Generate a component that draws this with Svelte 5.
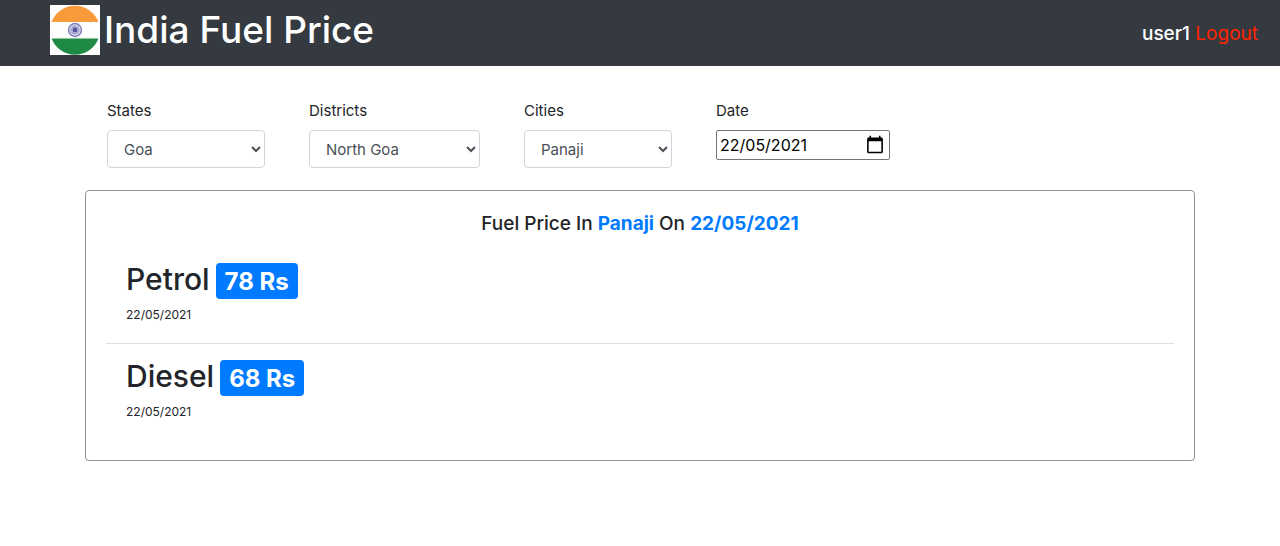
<script>
  const regions = {
    Goa: {
      'North Goa': ['Panaji', 'Mapusa'],
      'South Goa': ['Margao', 'Vasco']
    }
  };

  const fuels = [
    { name: 'Petrol', price: 78 },
    { name: 'Diesel', price: 68 }
  ];

  let region = $state('Goa');
  let district = $state('North Goa');
  let city = $state('Panaji');
  let date = $state('2021-05-22');

  let shownDate = $derived(date.split('-').reverse().join('/'));
</script>

<header>
  <a class="brand" href="#home">
    <svg class="flag" viewBox="0 0 50 50" aria-hidden="true">
      <rect width="50" height="50" fill="#fdfdfd" />
      <path d="M1.6 17A25 25 0 0 1 48.4 17Z" fill="#f89a3a" />
      <path d="M1.6 33.500A25 25 0 0 0 48.4 33.500Z" fill="#1f8a43" />
      <circle cx="25" cy="25" r="6.400" fill="#e4e4f2" stroke="#8080ba" stroke-width="1.500" />
      <circle cx="25" cy="25" r="3.600" fill="none" stroke="#9494c6" stroke-width="2.200" stroke-dasharray="0.900 0.300" />
      <circle cx="25" cy="25" r="2.400" fill="#5353a0" />
    </svg>
    <h1>India Fuel Price</h1>
  </a>
  <div class="account">
    <span class="user">user1</span>
    <a class="logout" href="#logout">Logout</a>
  </div>
</header>

<main>
  <form class="filters">
    <div class="field">
      <label for="state">States</label>
      <select id="state" class="w-state" bind:value={region}>
        {#each Object.keys(regions) as name}<option>{name}</option>{/each}
      </select>
    </div>
    <div class="field">
      <label for="district">Districts</label>
      <select id="district" class="w-district" bind:value={district}>
        {#each Object.keys(regions[region]) as name}<option>{name}</option>{/each}
      </select>
    </div>
    <div class="field">
      <label for="city">Cities</label>
      <select id="city" class="w-city" bind:value={city}>
        {#each regions[region][district] as name}<option>{name}</option>{/each}
      </select>
    </div>
    <div class="field">
      <label for="date">Date</label>
      <div class="date">
        <input id="date" type="date" bind:value={date} />
        <!-- Day-first date, whatever the browser's locale -->
        <span class="date-text" aria-hidden="true">{shownDate}</span>
      </div>
    </div>
  </form>

  <section class="card">
    <h2>Fuel Price In <b>{city}</b> On <b>{shownDate}</b></h2>
    <ul>
      {#each fuels as fuel}
        <li>
          <h3>{fuel.name} <span class="badge">{fuel.price} Rs</span></h3>
          <p>{shownDate}</p>
        </li>
      {/each}
    </ul>
  </section>
</main>

<style>
  :global(body) {
    margin: 0;
    background: #fff;
    color: #212529;
    font: 400 16px/24px Inter, 'Liberation Sans', sans-serif;
  }

  header, main, header *, main * {
    box-sizing: border-box;
  }

  h1, h2, h3, p, ul {
    margin: 0;
    padding: 0;
    font-weight: 500;
  }

  a {
    text-decoration: none;
  }

  header {
    display: flex;
    justify-content: space-between;
    align-items: center;
    height: 66px;
    padding: 0 22px 0 50px;
    background: #343a40;
    color: #fff;
  }

  .brand {
    display: flex;
    gap: 4px;
    padding-bottom: 6px;
    color: #fff;
  }

  .flag {
    width: 50px;
    height: 50px;
  }

  h1 {
    font-size: 37px;
    line-height: 50px;
  }

  .account {
    padding-top: 2px;
    font-size: 19px;
  }

  .user {
    font-weight: 500;
  }

  .logout {
    color: #f20;
  }

  main {
    max-width: 1110px;
    margin: 0 auto;
    padding: 33px 0;
  }

  .filters {
    display: flex;
    flex-wrap: wrap;
    gap: 44px;
    padding: 0 22px;
    margin-bottom: 22px;
  }

  .field {
    display: flex;
    flex-direction: column;
    gap: 7px;
  }

  label {
    font-size: 15px;
  }

  select {
    height: 38px;
    padding: 6px 12px;
    border: 1px solid #ced4da;
    border-radius: 4px;
    background: #fff;
    color: #495057;
    font: inherit;
    font-size: 15px;
  }

  .w-state {
    width: 158px;
  }

  .w-district {
    width: 171px;
  }

  .w-city {
    width: 148px;
  }

  .date {
    position: relative;
    width: 174px;
  }

  input {
    display: block;
    width: 100%;
    height: 30px;
    padding: 1px 2px;
    border: 1px solid #767676;
    border-radius: 2px;
    background: #fff;
    color: #000;
    font: inherit;
  }

  input::-webkit-datetime-edit {
    opacity: 0;
  }

  input::-webkit-calendar-picker-indicator {
    width: 20px;
    height: 20px;
  }

  .date-text {
    position: absolute;
    left: 4px;
    top: 3px;
    color: #000;
    pointer-events: none;
  }

  .card {
    padding: 20px;
    border: 1px solid #8e9093;
    border-radius: 4px;
  }

  h2 {
    padding-top: 1px;
    margin-bottom: 11px;
    font-size: 19px;
    line-height: 24px;
    text-align: center;
  }

  b {
    color: #007bff;
    font-weight: 700;
  }

  ul {
    list-style: none;
  }

  li {
    padding: 15px 20px 19px;
  }

  li + li {
    border-top: 1px solid #dfdfdf;
  }

  h3 {
    display: flex;
    align-items: baseline;
    gap: 6px;
    margin-bottom: 7px;
    font-size: 30px;
    line-height: 34px;
  }

  .badge {
    padding: 7px 9px 5px;
    border-radius: 4px;
    background: #007bff;
    color: #fff;
    font-size: 24px;
    font-weight: 700;
    line-height: 24px;
  }

  p {
    font-size: 12px;
    font-weight: 400;
    line-height: 18px;
  }
</style>
